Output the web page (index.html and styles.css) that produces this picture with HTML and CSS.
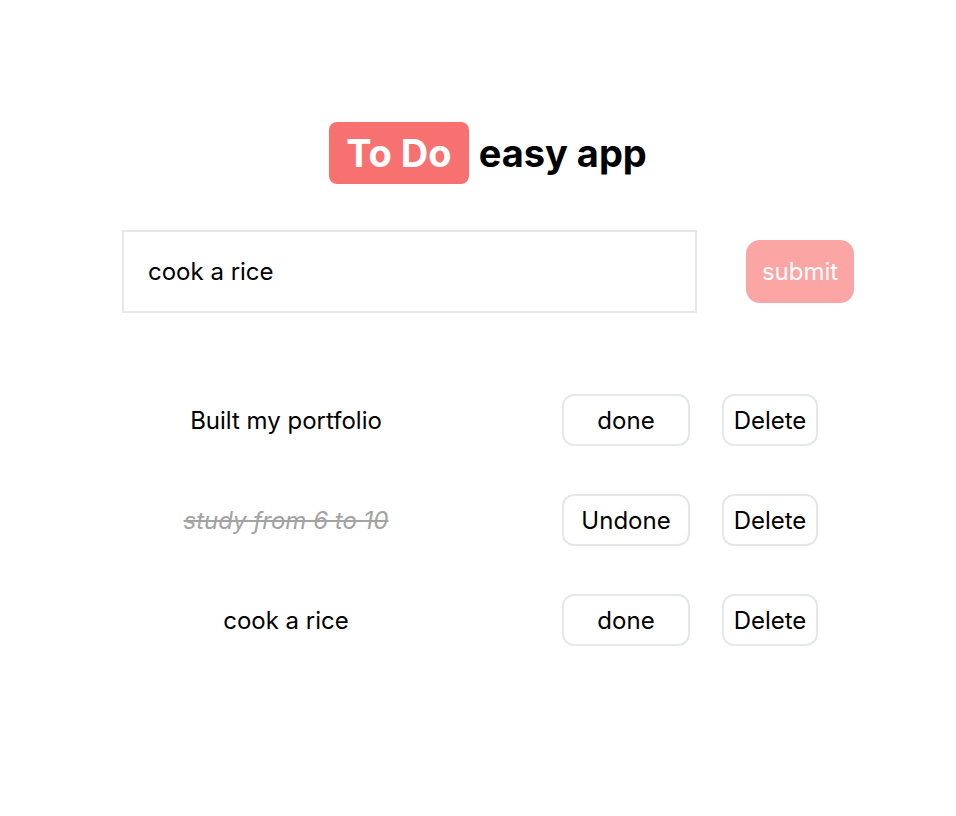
FILE: index.html
```html
<!DOCTYPE html>
<html>
<head>
<meta charset="utf-8">
<link rel="stylesheet" href="styles.css">
</head>
<body>
<div class="app">
  <h1 class="title"><span class="badge">To Do</span><span class="rest">easy app</span></h1>
  <form class="form">
    <input class="input" type="text" value="cook a rice">
    <button class="submit" type="button">submit</button>
  </form>
  <ul class="list">
    <li class="row">
      <span class="task">Built my portfolio</span>
      <button class="btn btn-toggle">done</button>
      <button class="btn btn-delete">Delete</button>
    </li>
    <li class="row">
      <span class="task completed">study from 6 to 10</span>
      <button class="btn btn-toggle">Undone</button>
      <button class="btn btn-delete">Delete</button>
    </li>
    <li class="row">
      <span class="task">cook a rice</span>
      <button class="btn btn-toggle">done</button>
      <button class="btn btn-delete">Delete</button>
    </li>
  </ul>
</div>
</body>
</html>
```
FILE: styles.css
```css
* { box-sizing: border-box; }
body {
  margin: 0;
  background: #fff;
  font-family: Inter, "Noto Sans", sans-serif;
  color: #000;
}
.app {
  width: 732px;
  margin-left: 122px;
  padding-top: 122px;
}
.title {
  margin: 0;
  display: flex;
  justify-content: center;
  align-items: center;
  gap: 10px;
  font-size: 38px;
  font-weight: 700;
}
.badge {
  background: #f87171;
  color: #fff;
  height: 62px;
  line-height: 62px;
  padding: 0 17px;
  border-radius: 8px;
}
.rest { line-height: 62px; }
.form {
  margin-top: 46px;
  display: flex;
  align-items: center;
  gap: 49px;
}
.input {
  width: 575px;
  height: 83px;
  border: 2px solid #e5e7eb;
  padding: 0 24px;
  font-family: Inter, "Noto Sans", sans-serif;
  font-size: 24px;
  color: #000;
  outline: none;
}
.submit {
  width: 108px;
  height: 63px;
  border: none;
  border-radius: 14px;
  background: #fca5a5;
  color: #fff;
  font-family: Inter, "Noto Sans", sans-serif;
  font-size: 24px;
  padding: 0;
}
.list {
  list-style: none;
  margin: 81px 0 0;
  padding: 0;
  display: flex;
  flex-direction: column;
  gap: 48px;
}
.row {
  display: flex;
  align-items: center;
  height: 52px;
}
.task {
  width: 328px;
  text-align: center;
  font-size: 24px;
  margin-right: 112px;
}
.task.completed {
  color: #a3a3a3;
  font-style: italic;
  text-decoration: line-through;
}
.btn {
  height: 52px;
  border: 2px solid #e5e7eb;
  border-radius: 12px;
  background: #fff;
  font-family: Inter, "Noto Sans", sans-serif;
  font-size: 24px;
  color: #000;
  padding: 0;
}
.btn-toggle { width: 128px; margin-right: 32px; }
.btn-delete { width: 96px; }
```
